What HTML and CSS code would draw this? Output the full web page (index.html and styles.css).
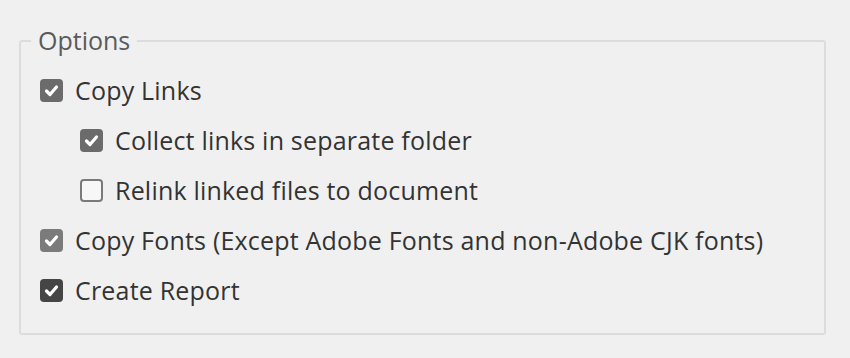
FILE: index.html
```html
<!DOCTYPE html>
<html>
<head>
  <title>Package Options</title>
  <meta name="viewport" content="width=device-width,initial-scale=1.0">
  <link rel="stylesheet" href="styles.css">
</head>
<body>

  <fieldset class="options">
    <legend>Options</legend>

    <div class="row">
      <span class="box checked"><svg viewBox="0 0 23 23"><path d="M6.5 12l3.5 3.5 6.5-7.5"/></svg></span>
      <span class="label">Copy Links</span>
    </div>

    <div class="row sub">
      <span class="box checked"><svg viewBox="0 0 23 23"><path d="M6.5 12l3.5 3.5 6.5-7.5"/></svg></span>
      <span class="label">Collect links in separate folder</span>
    </div>

    <div class="row sub">
      <span class="box"></span>
      <span class="label">Relink linked files to document</span>
    </div>

    <div class="row">
      <span class="box checked light"><svg viewBox="0 0 23 23"><path d="M6.5 12l3.5 3.5 6.5-7.5"/></svg></span>
      <span class="label">Copy Fonts (Except Adobe Fonts and non-Adobe CJK fonts)</span>
    </div>

    <div class="row">
      <span class="box checked dark"><svg viewBox="0 0 23 23"><path d="M6.5 12l3.5 3.5 6.5-7.5"/></svg></span>
      <span class="label">Create Report</span>
    </div>
  </fieldset>

</body>
</html>
```

FILE: styles.css
```css
  body{
    margin: 0;
    background-color: #f0f0f0;
    font-family: 'Open Sans', 'Liberation Sans', sans-serif;
  }

  .options{
    margin: 28px 0 0 19px;
    width: 807px;
    height: 307px;
    box-sizing: border-box;
    border: 2px solid #dcdcdc;
    border-radius: 3px;
    padding: 12px 0 0 0;
    display: flex;
    flex-direction: column;
  }

  legend{
    margin-left: 10px;
    padding: 0 7px;
    font-size: 25px;
    color: #5a5a5a;
    line-height: 25px;
  }

  .row{
    display: flex;
    align-items: center;
    height: 50px;
    gap: 12px;
    padding-left: 19px;
  }

  .row.sub{
    padding-left: 59px;
  }

  .box{
    width: 23px;
    height: 23px;
    box-sizing: border-box;
    border: 2px solid #7a7a7a;
    border-radius: 4px;
    background-color: #f7f7f7;
    flex: none;
  }

  .box.checked{
    border: none;
    background-color: #6b6b6b;
  }
  .box.light{
    background-color: #7b7b7b;
  }
  .box.dark{
    background-color: #454545;
  }

  .box svg{
    display: block;
    width: 23px;
    height: 23px;
  }
  .box svg path{
    fill: none;
    stroke: #fff;
    stroke-width: 3.2;
    stroke-linecap: round;
    stroke-linejoin: round;
  }

  .label{
    font-size: 25px;
    letter-spacing: 0.2px;
    color: #333;
  }
```
